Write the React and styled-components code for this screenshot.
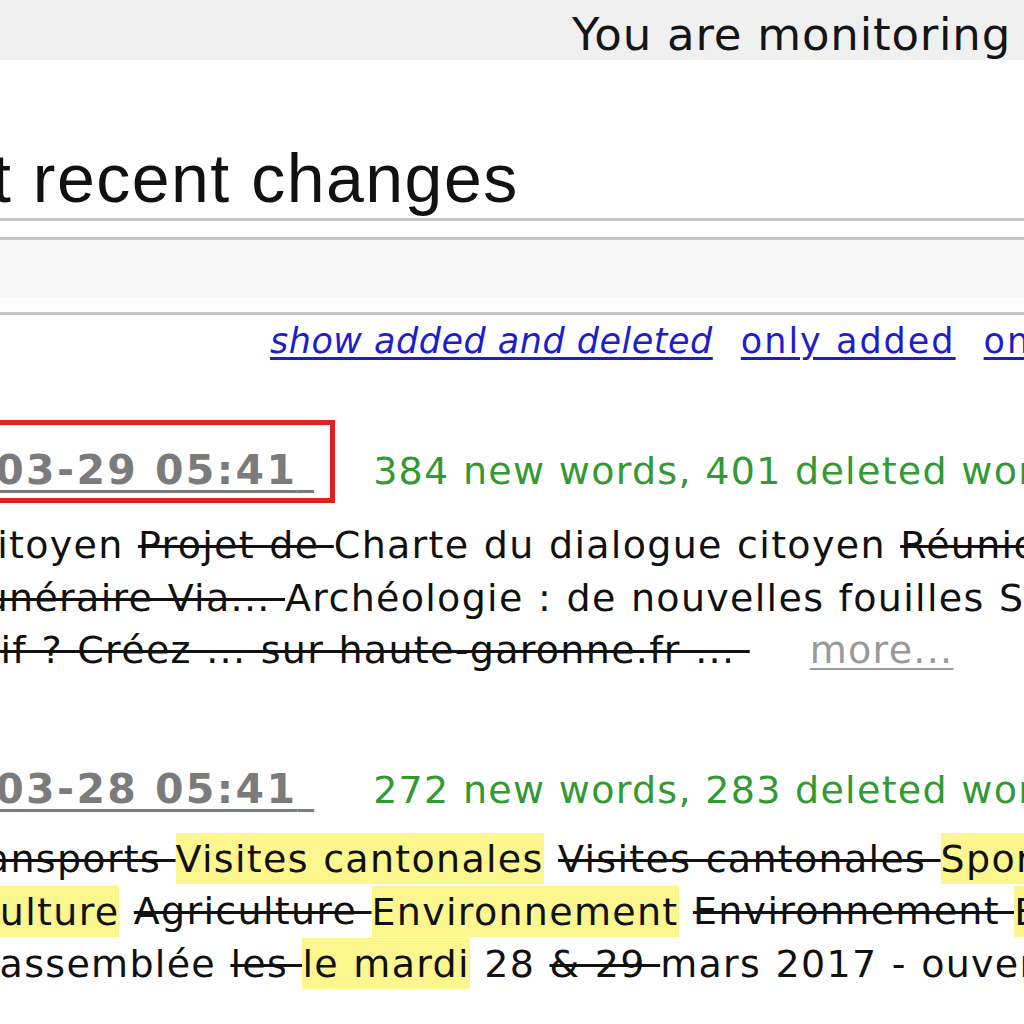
import React from 'react';
import styled, { createGlobalStyle } from 'styled-components';

const GlobalStyle = createGlobalStyle`
  html, body {
    margin: 0;
    padding: 0;
    background: #fff;
    overflow: hidden;
  }
`;

const App = () => {
  return (
    <Page>
      <GlobalStyle />
      <TopBar>You are monitoring</TopBar>
      <Title>Most recent changes</Title>
      <Toolbar />
      <Links>
        <ModeLink href="#" $active>show added and deleted</ModeLink>
        <ModeLink href="#">only added</ModeLink>
        <ModeLink href="#">only deleted</ModeLink>
      </Links>

      <Entries>
        <Entry>
          <DateRow>
            <DateBox $marked>
              <DateLink href="#">2017-03-29 05:41{'\u00a0'}</DateLink>
            </DateBox>
            <Stats>384 new words, 401 deleted words</Stats>
          </DateRow>
          <Body>
            <Line $shift={-25}>
              citoyen <Del>Projet de </Del>Charte du dialogue citoyen <Del>Réunion publique</Del>
            </Line>
            <Line $shift={-31}>
              <Del>funéraire Via... </Del>Archéologie : de nouvelles fouilles Sur le site
            </Line>
            <Line $shift={-108}>
              <Del>Sportif ? Créez ... sur haute-garonne.fr ... </Del>
              <More href="#">more...</More>
            </Line>
          </Body>
        </Entry>

        <Entry>
          <DateRow>
            <DateBox>
              <DateLink href="#">2017-03-28 05:41{'\u00a0'}</DateLink>
            </DateBox>
            <Stats>272 new words, 283 deleted words</Stats>
          </DateRow>
          <Body>
            <Line $shift={-50}>
              <Del>Transports </Del><Ins>Visites cantonales</Ins> <Del>Visites cantonales </Del><Ins>Sports</Ins>
            </Line>
            <Line $shift={-28}>
              <Ins>Culture</Ins> <Del>Agriculture </Del><Ins>Environnement</Ins> <Del>Environnement </Del><Ins>Emploi</Ins>
            </Line>
            <Line $shift={-24}>
              l'assemblée <Del>les </Del><Ins>le mardi</Ins> 28 <Del>&amp; 29 </Del>mars 2017 - ouverture
            </Line>
          </Body>
        </Entry>
      </Entries>
    </Page>
  );
};

export default App;

const Page = styled.div`
  width: 1024px;
  height: 1024px;
  overflow: hidden;
  background: #fff;
  font-family: "DejaVu Sans", Verdana, sans-serif;
  color: #111;
`;

const TopBar = styled.div`
  height: 48px;
  padding: 12px 0 0 572px;
  background: #f0f0f0;
  font-size: 45px;
  line-height: 45px;
  letter-spacing: 0.8px;
  white-space: nowrap;
  color: #151515;
`;

const Title = styled.h1`
  margin: 80px 0 0 -141px;
  padding: 0 0 2px;
  font-family: "Liberation Sans", Arial, sans-serif;
  font-weight: normal;
  font-size: 68px;
  line-height: 76px;
  letter-spacing: 1.5px;
  white-space: nowrap;
  color: #111;
  border-bottom: 3px solid #c6c6c6;
`;

const Toolbar = styled.div`
  margin-top: 16px;
  height: 72px;
  border-top: 3px solid #c6c6c6;
  border-bottom: 3px solid #c6c6c6;
  background: linear-gradient(#f8f8f8 0 57px, #fdfdfd 57px);
`;

const Links = styled.nav`
  display: flex;
  gap: 28px;
  margin-top: 6px;
  padding-left: 270px;
  font-size: 35px;
  line-height: 40px;
  white-space: nowrap;
`;

const ModeLink = styled.a`
  flex-shrink: 0;
  color: #1e1ec8;
  font-style: ${p => (p.$active ? 'italic' : 'normal')};
  letter-spacing: ${p => (p.$active ? 0.5 : 2)}px;
  text-decoration: underline;
  text-decoration-thickness: 3px;
  text-underline-offset: 4px;
`;

const Entries = styled.div`
  display: flex;
  flex-direction: column;
  gap: 67px;
  margin-top: 59px;
`;

const Entry = styled.div``;

const DateRow = styled.div`
  display: flex;
  align-items: baseline;
  white-space: nowrap;
`;

const DateBox = styled.div`
  flex-shrink: 0;
  height: 55px;
  margin-left: -160px;
  padding: 18px 16px 0 7px;
  line-height: 55px;
  border-style: solid;
  border-color: ${p => (p.$marked ? '#e3201f' : 'transparent')};
  border-width: ${p => (p.$marked ? '5px' : '0 5px')};
`;

const DateLink = styled.a`
  font-size: 41px;
  font-weight: bold;
  letter-spacing: 2.4px;
  color: #7b7b7b;
  text-decoration: underline;
  text-decoration-thickness: 3px;
  text-underline-offset: 6px;
`;

const Stats = styled.span`
  flex-shrink: 0;
  margin-left: 38px;
  font-size: 38px;
  letter-spacing: 1.3px;
  color: #339933;
`;

const Body = styled.div`
  margin-top: 16px;
  font-size: 38px;
  letter-spacing: 1.3px;
  word-spacing: 1px;
`;

const Line = styled.div`
  height: 52.5px;
  line-height: 52.5px;
  margin-left: ${p => p.$shift}px;
  white-space: nowrap;
`;

const Del = styled.span`
  text-decoration: line-through;
  text-decoration-thickness: 3px;
  text-decoration-color: #111;
`;

const Ins = styled.span`
  padding: 3.5px 0;
  background: #fbf68e;
`;

const More = styled.a`
  margin-left: 60px;
  color: #999;
  text-decoration: underline;
  text-decoration-thickness: 2px;
  text-underline-offset: 5px;
`;
